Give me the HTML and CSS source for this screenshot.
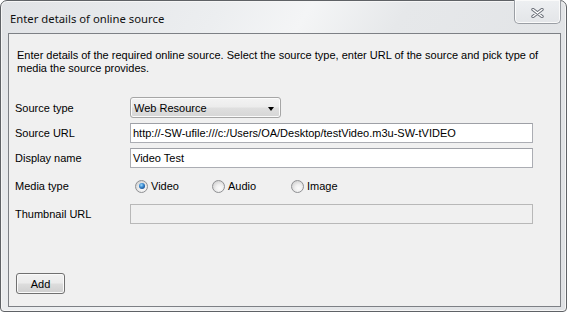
FILE: index.html
```html
<!DOCTYPE html>
<html>
<head>
<meta charset="utf-8">
<link rel="stylesheet" href="styles.css">
</head>
<body>
<div class="window">
  <div class="titlebar">
    <span class="title">Enter details of online source</span>
    <div class="close">
      <svg width="13" height="10" viewBox="0 0 13 10">
        <path d="M2 1.5 L11 8.5 M11 1.5 L2 8.5" stroke="#6a6f78" stroke-width="3.4" stroke-linecap="round" fill="none"/>
        <path d="M2 1.5 L11 8.5 M11 1.5 L2 8.5" stroke="#ffffff" stroke-width="1.5" stroke-linecap="round" fill="none"/>
      </svg>
    </div>
  </div>
  <div class="client">
    <p class="desc">Enter details of the required online source. Select the source type, enter URL of the source and pick type of<br>media the source provides.</p>
    <div class="form">
      <span class="label">Source type</span>
      <div class="combo"><span>Web Resource</span><i class="arrow"></i></div>
      <span class="label">Source URL</span>
      <div class="field">http://-SW-ufile:///c:/Users/OA/Desktop/testVideo.m3u-SW-tVIDEO</div>
      <span class="label">Display name</span>
      <div class="field">Video Test</div>
      <span class="label">Media type</span>
      <div class="radios">
        <span class="opt"><i class="radio checked"></i>Video</span>
        <span class="opt"><i class="radio"></i>Audio</span>
        <span class="opt"><i class="radio"></i>Image</span>
      </div>
      <span class="label">Thumbnail URL</span>
      <div class="field disabled"></div>
    </div>
    <div class="footer"><button class="btn">Add</button></div>
  </div>
</div>
</body>
</html>
```

FILE: styles.css
```css
html, body {
  margin: 0;
  padding: 0;
  background: #ffffff;
}
body {
  width: 568px;
  height: 313px;
  overflow: hidden;
  font-family: "Liberation Sans", Arial, sans-serif;
  font-size: 11px;
  color: #000;
}
.window {
  box-sizing: border-box;
  width: 567px;
  height: 312px;
  border: 1px solid #5f6266;
  border-radius: 7px 7px 4px 4px;
  background: linear-gradient(120deg, #e1e3e6 0%, #eceef0 30%, #f4f5f6 42%, #e6e8ea 55%, #dfe1e4 100%);
  box-shadow: inset 0 0 0 1px #f6f6f6;
  display: flex;
  flex-direction: column;
  padding: 0 5px 4px 7px;
}
.titlebar {
  height: 32px;
  display: flex;
  align-items: flex-start;
  justify-content: space-between;
  flex: none;
}
.title {
  font-family: "Noto Sans", "Open Sans", sans-serif;
  font-size: 11.3px;
  color: #111;
  margin-left: 2px;
  margin-top: 10px;
  line-height: 16px;
}
.close {
  box-sizing: border-box;
  width: 47px;
  height: 24px;
  margin-top: -1px;
  margin-right: 0px;
  border: 1px solid #9a9ea4;
  border-top: none;
  border-radius: 0 0 5px 5px;
  background: linear-gradient(#eef0f2, #e3e5e8);
  box-shadow: inset 0 0 0 1px #fafafa;
  display: flex;
  align-items: center;
  justify-content: center;
  padding-top: 3px;
}
.close svg { display: block; }
.client {
  flex: 1;
  border: 1px solid #7d8085;
  background: #f0f0f0;
  display: flex;
  flex-direction: column;
  padding: 0 27px 0 6px;
}
.desc {
  margin: 15px 0 0 2px;
  line-height: 13px;
  white-space: nowrap;
  color: #000;
}
.form {
  margin-top: 22px;
  display: grid;
  grid-template-columns: 115px 1fr;
  grid-template-rows: 21px 20px 20px 26px 20px;
  row-gap: 5px;
}
.label {
  align-self: center;
  color: #000;
}
.combo {
  box-sizing: border-box;
  width: 151px;
  height: 21px;
  border: 1px solid #a6a6a6;
  border-radius: 3px;
  background: linear-gradient(#f3f3f3 0%, #ececec 48%, #dfdfdf 52%, #d6d6d6 100%);
  box-shadow: inset 0 0 0 1px #fbfbfb;
  display: flex;
  align-items: center;
  justify-content: space-between;
  padding: 0 6px 0 3px;
}
.arrow {
  width: 0;
  height: 0;
  border-left: 3.5px solid transparent;
  border-right: 3.5px solid transparent;
  border-top: 4px solid #000;
  margin-top: 2px;
}
.field {
  box-sizing: border-box;
  height: 20px;
  border: 1px solid #abadb3;
  border-top-color: #9ea0a6;
  background: #fff;
  padding: 0 2px;
  line-height: 18px;
  white-space: nowrap;
  overflow: hidden;
}
.field.disabled {
  background: #f0f0f0;
  border-color: #b8b8b8;
}
.radios {
  display: grid;
  grid-template-columns: 77px 79px auto;
  align-items: center;
  padding-left: 5px;
}
.opt {
  display: flex;
  align-items: center;
}
.radio {
  box-sizing: border-box;
  width: 13px;
  height: 13px;
  border-radius: 50%;
  border: 1px solid #8f9093;
  background: radial-gradient(circle at 60% 65%, #fbfbfb 0%, #f0f0f0 35%, #d5d5d5 75%, #c9c9c9 100%);
  margin-right: 3px;
  position: relative;
}
.radio.checked::after {
  content: "";
  position: absolute;
  left: 2.5px;
  top: 2.5px;
  width: 6px;
  height: 6px;
  border-radius: 50%;
  background: radial-gradient(circle at 40% 35%, #9fdcff 0%, #3a89cf 40%, #174b8c 80%, #123d74 100%);
}
.footer {
  margin-top: auto;
  margin-bottom: 12px;
  padding-left: 1px;
}
.btn {
  box-sizing: border-box;
  width: 49px;
  height: 21px;
  border: 1px solid #707070;
  border-radius: 3px;
  background: linear-gradient(#f2f2f2 0%, #ebebeb 48%, #dddddd 52%, #cfcfcf 100%);
  box-shadow: inset 0 0 0 1px #fafafa;
  font-family: "Liberation Sans", Arial, sans-serif;
  font-size: 11px;
  color: #000;
  padding: 0;
  display: block;
}
```
